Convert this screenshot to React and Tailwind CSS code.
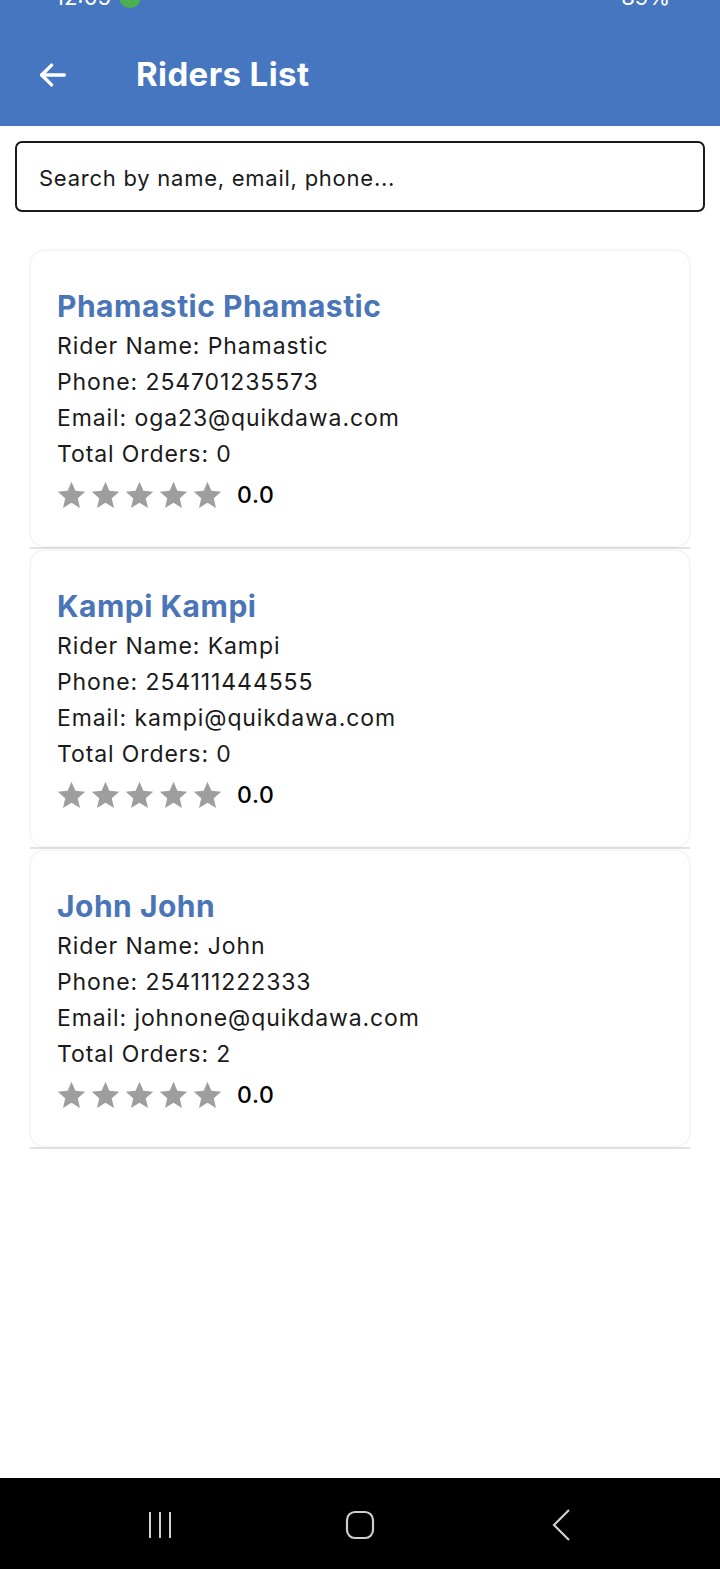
import React from "react";

const riders = [
  { full: "Phamastic Phamastic", name: "Phamastic", phone: "254701235573", email: "oga23@quikdawa.com", orders: 0 },
  { full: "Kampi Kampi", name: "Kampi", phone: "254111444555", email: "kampi@quikdawa.com", orders: 0 },
  { full: "John John", name: "John", phone: "254111222333", email: "johnone@quikdawa.com", orders: 2 },
];

function Star() {
  return (
    <svg width="33" height="33" viewBox="0 0 24 24" fill="#9e9e9e">
      <path d="M12 17.27L18.18 21l-1.64-7.03L22 9.24l-7.19-.61L12 2 9.19 8.63 2 9.24l5.46 4.73L5.82 21z" />
    </svg>
  );
}

function RiderCard({ r }) {
  return (
    <div className="border-b-2 border-[#e2e2e2]">
      <div className="rounded-[14px] bg-white shadow-[0_0_3px_rgba(0,0,0,0.06)] border border-[#f3f3f3] pl-[26px] pt-[37px] h-[297px]">
        <div className="text-[30px] leading-[36px] font-bold text-[#4a76b8] tracking-[0.5px]">{r.full}</div>
        <div className="mt-[4px] text-[23px] leading-[36px] text-[#1a1a1a] tracking-[0.9px]">
          <div>Rider Name: {r.name}</div>
          <div>Phone: {r.phone}</div>
          <div>Email: {r.email}</div>
          <div>Total Orders: {r.orders}</div>
        </div>
        <div className="flex items-center mt-[6px]">
          <div className="flex gap-[1px] -ml-[2px]">
            <Star /><Star /><Star /><Star /><Star />
          </div>
          <span className="ml-[13px] text-[23px] font-medium text-black tracking-[0.7px]">0.0</span>
        </div>
      </div>
    </div>
  );
}

export default function App() {
  return (
    <div className="w-[720px] h-[1569px] bg-white flex flex-col overflow-hidden" style={{ fontFamily: "Inter, Roboto, 'Noto Sans', sans-serif" }}>
      <div className="bg-[#4676c0] h-[126px] shrink-0 flex flex-col overflow-hidden">
        <div className="h-[24px] relative overflow-hidden">
          <div className="absolute left-[55px] top-[-14px] flex items-center gap-[8px] text-white text-[22px] leading-[22px]">
            <span>12:05</span>
            <span className="w-[22px] h-[22px] rounded-full bg-[#4caf50] inline-block"></span>
          </div>
          <div className="absolute right-[50px] top-[-14px] text-white text-[22px] leading-[22px]">
            <span>89%</span>
          </div>
        </div>
        <div className="flex items-center flex-1 pl-[36px]">
          <svg width="34" height="34" viewBox="0 0 24 24" fill="none" stroke="white" strokeWidth="2.4" strokeLinecap="round" strokeLinejoin="round">
            <path d="M20 12H4" />
            <path d="M11 5l-7 7 7 7" />
          </svg>
          <span className="ml-[66px] text-white text-[33px] font-bold tracking-[0.4px]">Riders List</span>
        </div>
      </div>

      <div className="px-[15px] pt-[15px]">
        <div className="h-[71px] border-2 border-[#1a1a1a] rounded-[7px] flex items-center pl-[22px] pt-[3px] text-[22px] text-[#1a1a1a] tracking-[0.75px]">
          Search by name, email, phone...
        </div>
      </div>

      <div className="px-[30px] pt-[38px] flex flex-col gap-[1px] flex-1">
        {riders.map((r) => (
          <RiderCard key={r.phone} r={r} />
        ))}
      </div>

      <div className="h-[91px] bg-black shrink-0 flex items-center justify-between px-[145px] pt-[3px]">
        <svg width="30" height="30" viewBox="0 0 30 30" stroke="#cfcfcf" strokeWidth="2">
          <path d="M5 2v26M15 2v26M25 2v26" />
        </svg>
        <svg width="30" height="30" viewBox="0 0 30 30" fill="none" stroke="#cfcfcf" strokeWidth="2.2">
          <rect x="2" y="2" width="26" height="26" rx="8" />
        </svg>
        <svg width="30" height="34" viewBox="0 0 30 34" fill="none" stroke="#cfcfcf" strokeWidth="2.2">
          <path d="M24 2L9 17l15 15" />
        </svg>
      </div>
    </div>
  );
}
